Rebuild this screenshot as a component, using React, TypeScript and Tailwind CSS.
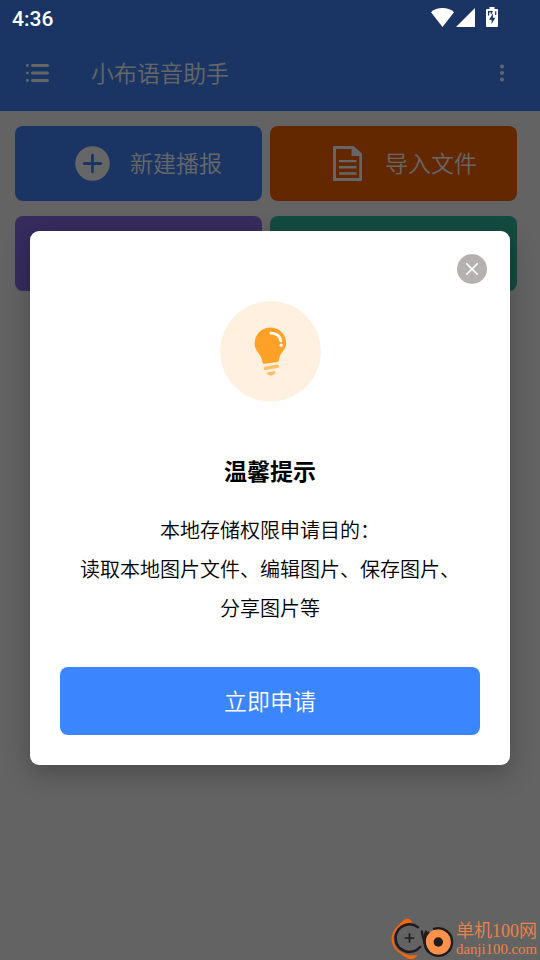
import type { ReactNode } from "react";

function StatusIcons() {
  return (
    <svg width="80" height="36" viewBox="0 0 80 36" fill="#fff">
      <path d="M6 12.2C9 9.4 13 8 17.5 8S26 9.4 29 12.2L17.5 27Z" />
      <path d="M50 8V27H31Z" />
      <path
        fillRule="evenodd"
        d="M64.500 7H69.500V9H72Q73 9 73 10V26Q73 27 72 27H62Q61 27 61 26V10Q61 9 62 9H64.500Z"
      />
      <path fill="#1a3564" d="M68 13.500 64 19.700H66.600V24L70.300 17.800H67.800Z" />
      <path stroke="#1a3564" strokeWidth="1.200" fill="none" d="M63.600 15.500V11.600H67L66 14M70.700 11.300V15" />
    </svg>
  );
}

function ListIcon() {
  return (
    <svg width="23" height="18" viewBox="0 0 23 18" fill="#fff">
      {[0, 7.5, 15].map((y) => (
        <g key={y}>
          <circle cx="1.400" cy={y + 1.5} r="1.400" />
          <rect x="5" y={y} width="18" height="3" rx="1.500" />
        </g>
      ))}
    </svg>
  );
}

function PlusIcon() {
  return (
    <svg width="35" height="35" viewBox="0 0 35 35">
      <circle cx="17.500" cy="17.500" r="17.300" fill="#fff" />
      <path d="M17.500 9.200V25.800M9.200 17.500H25.800" stroke="#4186fa" strokeWidth="2.800" strokeLinecap="round" />
    </svg>
  );
}

function DocIcon() {
  return (
    <svg width="29" height="35" viewBox="0 0 29 35" fill="#fff">
      <path fillRule="evenodd" d="M0 0H20.500L29 7.500V35H0ZM3 3V32H26.300V10H18.500V3Z" />
      <path d="M6 14H23.500V16.300H6ZM6 20H23.500V22.500H6ZM6 26.200H23.500V28.700H6Z" />
    </svg>
  );
}

function BulbIcon() {
  return (
    <svg width="101" height="101" viewBox="0 0 101 101">
      <circle cx="50.500" cy="50.300" r="50.300" fill="#fff0df" />
      <path
        fill="#ffa127"
        d="M50.500 26.500C41.500 26.500 34.500 33.500 34.700 42.500C34.800 48 37.500 50.800 39.700 53.700C41.600 56.400 41.700 58.600 42.500 61.200C42.900 62.700 43.800 63 45.200 62.800L57 61.100C58.300 60.900 58.900 60.300 59 59C59.300 56.500 59.800 54.500 61.700 51.900C63.800 49 66.200 46.500 66.200 41.800C66 33.200 59 26.500 50.500 26.500Z"
      />
      <path d="M51 32.200C56.200 32.300 59.900 35 60.900 40" fill="none" stroke="#fff" strokeWidth="2.800" strokeLinecap="round" />
      <circle cx="61.200" cy="44.200" r="1.600" fill="#fff" />
      <path d="M45.500 67.300 57.300 65.300" stroke="#ffbf6b" strokeWidth="3.700" strokeLinecap="round" />
      <path d="M46.300 71.600 55.200 70C56 71.600 53.900 74.500 51.200 74.700C48.500 74.800 46.500 73 46.300 71.600Z" fill="#ffbf6b" />
    </svg>
  );
}

function SiteLogo() {
  return (
    <svg width="65" height="42" viewBox="0 0 65 42" fill="none">
      <path
        fill="#f60"
        d="M22 4.500C21.500 1.500 18 -.2 15 1.200C12 3 10.500 5.500 7.500 8C-.3 15.500 -.3 26.500 7.500 33.500C11 35.500 12.500 37.500 16 39.500C21 42 25 41.700 27.500 36.800C22.500 38 17.500 37.500 12 34.500C1.300 29 .5 14.500 11 7.800C14.500 5.500 18.500 4.600 22 4.500Z"
      />
      <path d="M28 9.300A13.800 13.800 0 1 0 30 29" stroke="#231c1d" strokeWidth="2.500" strokeLinecap="round" />
      <path d="M19.500 15.300V24.700M14.800 20H24.200" stroke="#231c1d" strokeWidth="1.700" />
      <path d="M31.800 13.500C32.300 18 33.800 20.500 34.500 25" stroke="#231c1d" strokeWidth="2.300" strokeLinecap="round" />
      <circle cx="48.300" cy="24" r="12.800" fill="#ff914a" />
      <path d="M44 10.900A13.800 13.800 0 1 1 38.300 14.500" stroke="#231c1d" strokeWidth="2.300" strokeLinecap="round" />
      <circle cx="48.300" cy="24" r="4.700" fill="#231c1d" />
      <path d="M36 13.500C34.500 16.500 34 21 34.600 25C35 28 36.500 31 38.500 33.500" stroke="#231c1d" strokeWidth="2.200" strokeLinecap="round" />
    </svg>
  );
}

function ActionCard({ className, children }: { className: string; children?: ReactNode }) {
  return <div className={`flex h-[75px] items-center rounded-lg ${className}`}>{children}</div>;
}

export default function App() {
  return (
    <div className="relative h-[960px] w-[540px] overflow-hidden bg-[#f7f7f7] font-['Noto_Sans_CJK_SC',sans-serif] font-[350]">
      <header className="h-[111px] bg-[#4186fa] pt-9">
        <div className="flex h-[74px] items-center pl-[26px] pr-9 text-white">
          <ListIcon />
          <h1 className="ml-[42px] flex-1 pb-[2px] text-[23px] font-[350] leading-[34px]">小布语音助手</h1>
          <svg width="4" height="18" viewBox="0 0 4 18" fill="#fff">
            <circle cx="2" cy="2.500" r="2" />
            <circle cx="2" cy="9" r="2" />
            <circle cx="2" cy="15.500" r="2" />
          </svg>
        </div>
      </header>
      <main className="grid grid-cols-[247px_247px] gap-x-2 gap-y-[15px] px-[15px] pt-[15px] text-[23px] leading-[34px] text-white">
        <ActionCard className="gap-5 bg-[#4186fa] pl-[60px]">
          <PlusIcon />
          <span className="pb-[3px]">新建播报</span>
        </ActionCard>
        <ActionCard className="gap-[23px] bg-[#fa6400] pl-[63px]">
          <DocIcon />
          <span className="pb-[3px]">导入文件</span>
        </ActionCard>
        <ActionCard className="bg-[#876eeb]" />
        <ActionCard className="bg-[#30bba0]" />
      </main>

      <div className="absolute inset-0 bg-black/60">
        <div className="flex h-9 items-start justify-between pl-3 pr-[35px]">
          <span className="pt-[7px] font-[Roboto,sans-serif] text-[21px] font-medium leading-6 text-white">4:36</span>
          <StatusIcons />
        </div>
        <section className="mx-auto mt-[195px] flex h-[534px] w-[480px] flex-col items-center rounded-[9px] bg-white px-[30px] text-black shadow-[0_8px_26px_rgba(0,0,0,0.25)]">
          <button className="-mr-[7px] mt-[23px] flex size-[30px] items-center justify-center self-end rounded-full bg-[#b5b1b1]">
            <svg width="12" height="12" viewBox="0 0 12 12" stroke="#fff" strokeWidth="1.500" strokeLinecap="round">
              <path d="M.6 .6 11.400 11.400M11.400 .6 .6 11.400" />
            </svg>
          </button>
          <div className="mt-[17px]">
            <BulbIcon />
          </div>
          <h2 className="mt-[51px] text-[23px] font-bold leading-[34px]">温馨提示</h2>
          <p className="mt-[23px] text-center text-[20px] leading-[39px]">
            本地存储权限申请目的：
            <br />
            读取本地图片文件、编辑图片、保存图片、
            <br />
            分享图片等
          </p>
          <button className="mb-[30px] mt-auto h-[68px] w-full rounded-lg bg-[#3b85ff] pb-[2px] text-[23px] leading-[34px] text-white">
            立即申请
          </button>
        </section>
      </div>

      <div className="absolute bottom-0 right-0 flex h-[42px] w-[150px] text-[#ef8248]">
        <SiteLogo />
        <div className="ml-[1px] whitespace-nowrap font-['Liberation_Serif','Noto_Sans_CJK_SC',serif]">
          <div className="h-[23px] text-[18px] leading-[27px]">单机100网</div>
          <div className="text-[14.8px] leading-[17px]">danji100.com</div>
        </div>
      </div>
    </div>
  );
}
